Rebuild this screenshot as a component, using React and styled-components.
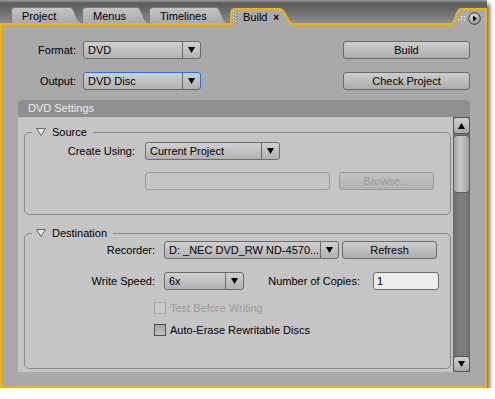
import React from "react";
import styled, { createGlobalStyle } from "styled-components";

const ORANGE = "#f5b400";
const PANEL = "#a9a9a9";
const CONTENT = "#c5c5c5";
const EDGE = "#6b6b6b";

const GlobalStyle = createGlobalStyle`
  html, body { margin: 0; padding: 0; background: #fff; }
  body {
    font-family: "Liberation Sans", Arial, sans-serif;
    font-size: 11px;
    color: #000;
  }
`;

const Frame = styled.div`
  width: 487px;
  box-shadow: 3px 4px 4px rgba(0, 0, 0, 0.55);
`;

const TabStrip = styled.div`
  height: 23px;
  display: flex;
  align-items: flex-end;
  padding-left: 11px;
  background: linear-gradient(#9c9c9c 0, #5c5c5c 3px, #666 9px, #8d8d8d 100%);
`;

const TabWrap = styled.div`
  display: flex;
  align-items: stretch;
  height: ${(p) => (p.$active ? "17px" : "16px")};
  margin-bottom: ${(p) => (p.$active ? "-2px" : "0")};
  margin-left: ${(p) => p.$gap || 0}px;
  position: relative;
  z-index: ${(p) => (p.$active ? 2 : 0)};
`;

const TabBody = styled.div`
  box-sizing: border-box;
  width: ${(p) => p.$w}px;
  display: flex;
  align-items: center;
  padding-left: 10px;
  border-top: 1px solid #7c7c7c;
  border-left: 1px solid #7c7c7c;
  border-top-left-radius: 4px;
  background: linear-gradient(#c4c4c4, #aaaaaa);
  color: #000;
  line-height: 14px;
`;

const ActiveBody = styled.div`
  box-sizing: border-box;
  width: ${(p) => p.$w}px;
  display: flex;
  align-items: center;
  padding: 0 0 1px 1px;
  border-top: 2px solid ${ORANGE};
  border-left: 2px solid ${ORANGE};
  border-top-left-radius: 5px;
  background: ${PANEL};
`;

const CloseX = styled.span`
  margin-left: auto;
  margin-right: 1px;
  font-weight: bold;
  font-size: 10px;
`;

const BumpBody = styled.div`
  box-sizing: border-box;
  width: 26px;
  display: flex;
  align-items: center;
  padding-top: 1px;
  border-top: 2px solid ${ORANGE};
  border-right: 2px solid ${ORANGE};
  background: ${PANEL};
`;

const Panel = styled.div`
  box-sizing: border-box;
  width: 487px;
  border: 2px solid ${ORANGE};
  background: ${PANEL};
  padding-bottom: 14px;
`;

const TopForm = styled.div`
  display: flex;
  justify-content: space-between;
  padding: 16px 15px 0 0;
`;

const Column = styled.div`
  display: flex;
  flex-direction: column;
  gap: 13px;
`;

const Row = styled.div`
  display: flex;
  align-items: center;
  height: ${(p) => p.$h || 18}px;
  gap: ${(p) => (p.$gap === undefined ? 0 : p.$gap)}px;
  margin-top: ${(p) => p.$mt || 0}px;
  padding-left: ${(p) => p.$pl || 0}px;
`;

const Label = styled.span`
  width: ${(p) => p.$w}px;
  text-align: right;
  white-space: nowrap;
  margin-right: ${(p) => p.$gap}px;
`;

const SelectBox = styled.div`
  box-sizing: border-box;
  width: ${(p) => p.$w}px;
  height: 18px;
  display: flex;
  border: 1px solid ${(p) => (p.$focused ? "#2f6fd6" : EDGE)};
  border-radius: 3px;
  background: linear-gradient(#d0d0d0, #b2b2b2);
`;

const SelectValue = styled.span`
  flex: 1;
  padding-left: 4px;
  line-height: 16px;
  white-space: nowrap;
  overflow: hidden;
`;

const SelectArrow = styled.span`
  width: 17px;
  display: flex;
  align-items: center;
  justify-content: center;
  border-left: 1px solid ${EDGE};
`;

const Button = styled.div`
  box-sizing: border-box;
  width: ${(p) => p.$w}px;
  height: 18px;
  line-height: 16px;
  text-align: center;
  border: 1px solid ${(p) => (p.$disabled ? "#9a9a9a" : EDGE)};
  border-radius: 3px;
  color: ${(p) => (p.$disabled ? "#999" : "#000")};
  background: ${(p) =>
    p.$disabled
      ? "linear-gradient(#c2c2c2, #b4b4b4)"
      : "linear-gradient(#cdcdcd, #adadad)"};
`;

const TextBox = styled.div`
  box-sizing: border-box;
  width: ${(p) => p.$w}px;
  height: 18px;
  line-height: 16px;
  padding-left: 3px;
  border: 1px solid ${(p) => (p.$disabled ? "#9c9c9c" : EDGE)};
  border-radius: 3px;
  background: ${(p) => (p.$disabled ? CONTENT : "#ececec")};
`;

const Section = styled.div`
  margin: 10px 15px 0 16px;
`;

const SectionHeader = styled.div`
  height: 17px;
  line-height: 17px;
  padding-left: 10px;
  color: #ececec;
  background: #909090;
  border-radius: 4px 4px 0 0;
`;

const SectionBody = styled.div`
  display: flex;
  height: 255px;
`;

const Content = styled.div`
  flex: 1;
  overflow: hidden;
  background: ${CONTENT};
  padding: 8px 0 0 6px;
`;

const Group = styled.fieldset`
  box-sizing: border-box;
  width: 427px;
  margin: ${(p) => p.$mt || 0}px 0 0 0;
  padding: ${(p) => p.$pt}px 0 ${(p) => p.$pb}px 0;
  border: 1px solid #8a8a8a;
  border-radius: 5px;
  min-width: 0;
`;

const Legend = styled.legend`
  display: flex;
  align-items: center;
  gap: 6px;
  margin-left: 7px;
  padding: 0 6px 0 4px;
  line-height: 14px;
`;

const CheckRow = styled.label`
  display: flex;
  align-items: center;
  height: 13px;
  gap: 4px;
  margin-top: ${(p) => p.$mt}px;
  padding-left: 129px;
  color: ${(p) => (p.$disabled ? "#9a9a9a" : "#000")};
`;

const Box = styled.span`
  box-sizing: border-box;
  width: 12px;
  height: 12px;
  border: 1px solid ${(p) => (p.$disabled ? "#a6a6a6" : "#4e4e4e")};
  background: ${(p) =>
    p.$disabled ? "#c8c8c8" : "linear-gradient(#a4a4a4, #c4c4c4)"};
`;

const Scrollbar = styled.div`
  width: 17px;
  display: flex;
  flex-direction: column;
  background: linear-gradient(to right, #6a6a6a, #7c7c7c 30%, #7c7c7c 70%, #6a6a6a);
`;

const ScrollButton = styled.div`
  box-sizing: border-box;
  height: ${(p) => p.$h}px;
  display: flex;
  align-items: center;
  justify-content: center;
  border: 1px solid #555;
  border-radius: 3px;
  background: linear-gradient(#d0d0d0, #a8a8a8);
`;

const Thumb = styled.div`
  box-sizing: border-box;
  height: 58px;
  margin-top: 1px;
  border: 1px solid #5c5c5c;
  border-radius: 4px;
  background: linear-gradient(to right, #a2a2a2, #c6c6c6 40%, #b8b8b8 70%, #9e9e9e);
`;

const Track = styled.div`
  flex: 1;
`;

function Tri({ up }) {
  return (
    <svg width="7" height="6" viewBox="0 0 7 6">
      <polygon points={up ? "0,6 7,6 3.5,0" : "0,0 7,0 3.5,6"} fill="#000" />
    </svg>
  );
}

function Ear({ id, active }) {
  if (active) {
    return (
      <svg width="13" height="17" viewBox="0 0 13 17" style={{ display: "block" }}>
        <path d="M0 1 C6 1 6.5 16 13 16 L13 17 L0 17 Z" fill={PANEL} />
        <path d="M0 1 C6 1 6.5 16 13 16" fill="none" stroke={ORANGE} strokeWidth="2" />
      </svg>
    );
  }
  return (
    <svg width="12" height="16" viewBox="0 0 12 16" style={{ display: "block" }}>
      <defs>
        <linearGradient id={id} x1="0" y1="0" x2="0" y2="1">
          <stop offset="0" stopColor="#c4c4c4" />
          <stop offset="1" stopColor="#aaaaaa" />
        </linearGradient>
      </defs>
      <path d="M0 0.5 C5 0.5 6 16 12 16 L0 16 Z" fill={`url(#${id})`} />
      <path d="M0 0.5 C5 0.5 6 16 12 16" fill="none" stroke="#7c7c7c" strokeWidth="1" />
    </svg>
  );
}

function BumpEar() {
  return (
    <svg width="10" height="17" viewBox="0 0 10 17" style={{ display: "block" }}>
      <path d="M10 1 C4 1 5 16 0 16 L0 17 L10 17 Z" fill={PANEL} />
      <path d="M10 1 C4 1 5 16 0 16" fill="none" stroke={ORANGE} strokeWidth="2" />
    </svg>
  );
}

function MenuIcon() {
  return (
    <svg width="13" height="13" viewBox="0 0 13 13" style={{ display: "block", marginLeft: 2 }}>
      <defs>
        <radialGradient id="mi" cx="0.4" cy="0.35" r="0.7">
          <stop offset="0" stopColor="#e2e2e2" />
          <stop offset="1" stopColor="#8e8e8e" />
        </radialGradient>
      </defs>
      <circle cx="6.5" cy="6.5" r="5.8" fill="url(#mi)" stroke="#3c3c3c" strokeWidth="1" />
      <polygon points="5,3.5 9,6.5 5,9.5" fill="#000" />
    </svg>
  );
}

function Dots() {
  return (
    <svg width="8" height="7" viewBox="0 0 8 7" style={{ display: "block", marginLeft: -3 }}>
      {[[1, 5], [4, 5], [4, 2], [7, 2], [7, 5]].map(([x, y], i) => (
        <rect key={i} x={x - 1} y={y - 1} width="1.5" height="1.5" fill="#e4e4e4" />
      ))}
    </svg>
  );
}

function Grip() {
  const dots = [];
  for (let r = 0; r < 4; r++) {
    for (let c = 0; c < 2; c++) {
      dots.push(<rect key={`${r}-${c}`} x={c * 2} y={r * 3 + (c ? 1 : 0)} width="1" height="1" fill="#e8e8e8" />);
      dots.push(<rect key={`s${r}-${c}`} x={c * 2 + 1} y={r * 3 + (c ? 2 : 1)} width="1" height="1" fill="#7a7a7a" />);
    }
  }
  return (
    <svg width="4" height="12" viewBox="0 0 4 12" style={{ display: "block", marginRight: 6 }}>
      {dots}
    </svg>
  );
}

function Tab({ label, width, id }) {
  return (
    <TabWrap>
      <TabBody $w={width}>{label}</TabBody>
      <Ear id={id} />
    </TabWrap>
  );
}

function Select({ value, width, focused }) {
  return (
    <SelectBox $w={width} $focused={focused}>
      <SelectValue>{value}</SelectValue>
      <SelectArrow>
        <Tri />
      </SelectArrow>
    </SelectBox>
  );
}

function Twisty() {
  return (
    <svg width="10" height="8" viewBox="0 0 10 8" style={{ display: "block" }}>
      <polygon points="0.5,0.5 9.5,0.5 5,7.5" fill="#e6e6e6" stroke="#6a6a6a" strokeWidth="1" />
    </svg>
  );
}

export default function App() {
  return (
    <>
      <GlobalStyle />
      <Frame>
        <TabStrip>
          <Tab label="Project" width={59} id="t1" />
          <Tab label="Menus" width={55} id="t2" />
          <Tab label="Timelines" width={67} id="t3" />
          <TabWrap $active $gap={2}>
            <ActiveBody $w={50}>
              <Grip />
              Build
              <CloseX>×</CloseX>
            </ActiveBody>
            <Ear active />
          </TabWrap>
          <TabWrap $active style={{ marginLeft: "auto" }}>
            <BumpEar />
            <BumpBody>
              <Dots />
              <MenuIcon />
            </BumpBody>
          </TabWrap>
        </TabStrip>
        <Panel>
          <TopForm>
            <Column>
              <Row>
                <Label $w={74} $gap={7}>Format:</Label>
                <Select value="DVD" width={118} />
              </Row>
              <Row>
                <Label $w={74} $gap={7}>Output:</Label>
                <Select value="DVD Disc" width={118} focused />
              </Row>
            </Column>
            <Column>
              <Button $w={127}>Build</Button>
              <Button $w={127}>Check Project</Button>
            </Column>
          </TopForm>

          <Section>
            <SectionHeader>DVD Settings</SectionHeader>
            <SectionBody>
              <Content>
                <Group $pt={3} $pb={24}>
                  <Legend>
                    <Twisty />
                    Source
                  </Legend>
                  <Row>
                    <Label $w={110} $gap={10}>Create Using:</Label>
                    <Select value="Current Project" width={135} />
                  </Row>
                  <Row $mt={12} $pl={120} $gap={9}>
                    <TextBox $w={185} $disabled />
                    <Button $w={95} $disabled>Browse...</Button>
                  </Row>
                </Group>

                <Group $mt={11} $pt={1} $pb={32}>
                  <Legend>
                    <Twisty />
                    Destination
                  </Legend>
                  <Row>
                    <Label $w={130} $gap={9}>Recorder:</Label>
                    <Select value="D: _NEC DVD_RW ND-4570..." width={175} />
                    <Button $w={95} style={{ marginLeft: 3 }}>Refresh</Button>
                  </Row>
                  <Row $mt={13}>
                    <Label $w={130} $gap={9}>Write Speed:</Label>
                    <Select value="6x" width={80} />
                    <Label $w={116} $gap={13}>Number of Copies:</Label>
                    <TextBox $w={66}>1</TextBox>
                  </Row>
                  <CheckRow $mt={11} $disabled>
                    <Box $disabled />
                    Test Before Writing
                  </CheckRow>
                  <CheckRow $mt={9}>
                    <Box />
                    Auto-Erase Rewritable Discs
                  </CheckRow>
                </Group>
              </Content>
              <Scrollbar>
                <ScrollButton $h={17}>
                  <Tri up />
                </ScrollButton>
                <Thumb />
                <Track />
                <ScrollButton $h={16}>
                  <Tri />
                </ScrollButton>
              </Scrollbar>
            </SectionBody>
          </Section>
        </Panel>
      </Frame>
    </>
  );
}
